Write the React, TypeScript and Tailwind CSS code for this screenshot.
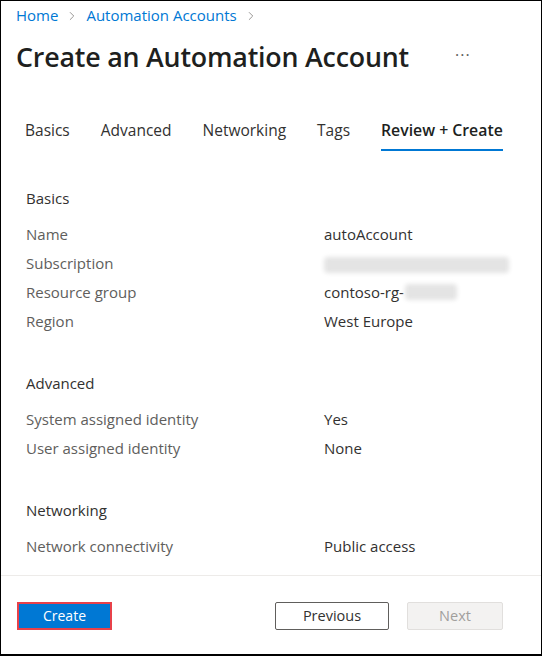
import { ChevronRight } from "lucide-react";

const font = { fontFamily: '"Open Sans", "Noto Sans", sans-serif' };

type Row = { label: string; value: React.ReactNode };

function Section({ title, rows }: { title: string; rows: Row[] }) {
  return (
    <div className="px-[25px]">
      <div className="text-[15px] text-[#323130] h-[22px] leading-[22px]">{title}</div>
      <div className="mt-[11px] flex flex-col">
        {rows.map((r) => (
          <div key={r.label} className="grid grid-cols-[298px_1fr] h-[29px] items-center text-[15px]">
            <span className="text-[#605e5c]">{r.label}</span>
            <span className="text-[#323130]">{r.value}</span>
          </div>
        ))}
      </div>
    </div>
  );
}

function Blur({ w }: { w: string }) {
  return (
    <span className={`inline-block h-[16px] align-middle bg-[#e4e4e4] blur-[2px] rounded ${w}`} />
  );
}

export default function App() {
  const tabs = ["Basics", "Advanced", "Networking", "Tags"];
  return (
    <div style={font} className="w-[542px] h-[656px] bg-white border border-black border-b-2 flex flex-col overflow-hidden">
      {/* breadcrumb */}
      <div className="flex items-center px-[15px] pt-[5px] h-[24px] text-[15px] text-[#0078d4]">
        <span>Home</span>
        <ChevronRight className="w-[14px] h-[14px] mx-[7px] text-[#8a8886]" strokeWidth={1.5} />
        <span>Automation Accounts</span>
        <ChevronRight className="w-[14px] h-[14px] ml-[7px] text-[#8a8886]" strokeWidth={1.5} />
      </div>

      {/* title */}
      <div className="flex items-center px-[15px] mt-[12px] h-[40px]">
        <h1 className="text-[26.8px] font-semibold text-[#201f1e] tracking-[-0.2px]">Create an Automation Account</h1>
        <span className="ml-[46px] text-[#605e5c] text-[16px] tracking-[1px] -mt-[4px]">···</span>
      </div>

      {/* tabs */}
      <div className="flex items-end gap-[31px] px-[24px] mt-[42px] text-[15.5px] text-[#323130]">
        {tabs.map((t) => (
          <div key={t} className="pb-[8px]">
            {t}
          </div>
        ))}
        <div className="pb-[6px] border-b-2 border-[#0078d4] font-semibold text-[#201f1e] text-[15.8px]">
          Review + Create
        </div>
      </div>

      <div className="mt-[36px] flex flex-col gap-[36px]">
        <Section
          title="Basics"
          rows={[
            { label: "Name", value: "autoAccount" },
            { label: "Subscription", value: <Blur w="w-[185px]" /> },
            {
              label: "Resource group",
              value: (
                <span className="flex items-center">
                  contoso-rg-
                  <Blur w="w-[52px] ml-[1px]" />
                </span>
              ),
            },
            { label: "Region", value: "West Europe" },
          ]}
        />
        <Section
          title="Advanced"
          rows={[
            { label: "System assigned identity", value: "Yes" },
            { label: "User assigned identity", value: "None" },
          ]}
        />
        <Section title="Networking" rows={[{ label: "Network connectivity", value: "Public access" }]} />
      </div>

      <div className="flex-1" />

      {/* footer */}
      <div className="border-t border-[#edebe9] h-[79px] flex items-start pt-[26px] px-[16px]">
        <button className="h-[28px] w-[95px] border-2 border-[#e8414a] bg-[#0078d4] text-white text-[14px] leading-none">
          Create
        </button>
        <div className="flex-1" />
        <button className="h-[28px] w-[114px] border border-[#605e5c] rounded-[2px] bg-white text-[#323130] text-[14.5px] leading-none">
          Previous
        </button>
        <button className="ml-[18px] mr-[22px] h-[28px] w-[96px] border border-[#e1dfdd] rounded-[2px] bg-[#f3f2f1] text-[#a19f9d] text-[14.5px] leading-none">
          Next
        </button>
      </div>
    </div>
  );
}
